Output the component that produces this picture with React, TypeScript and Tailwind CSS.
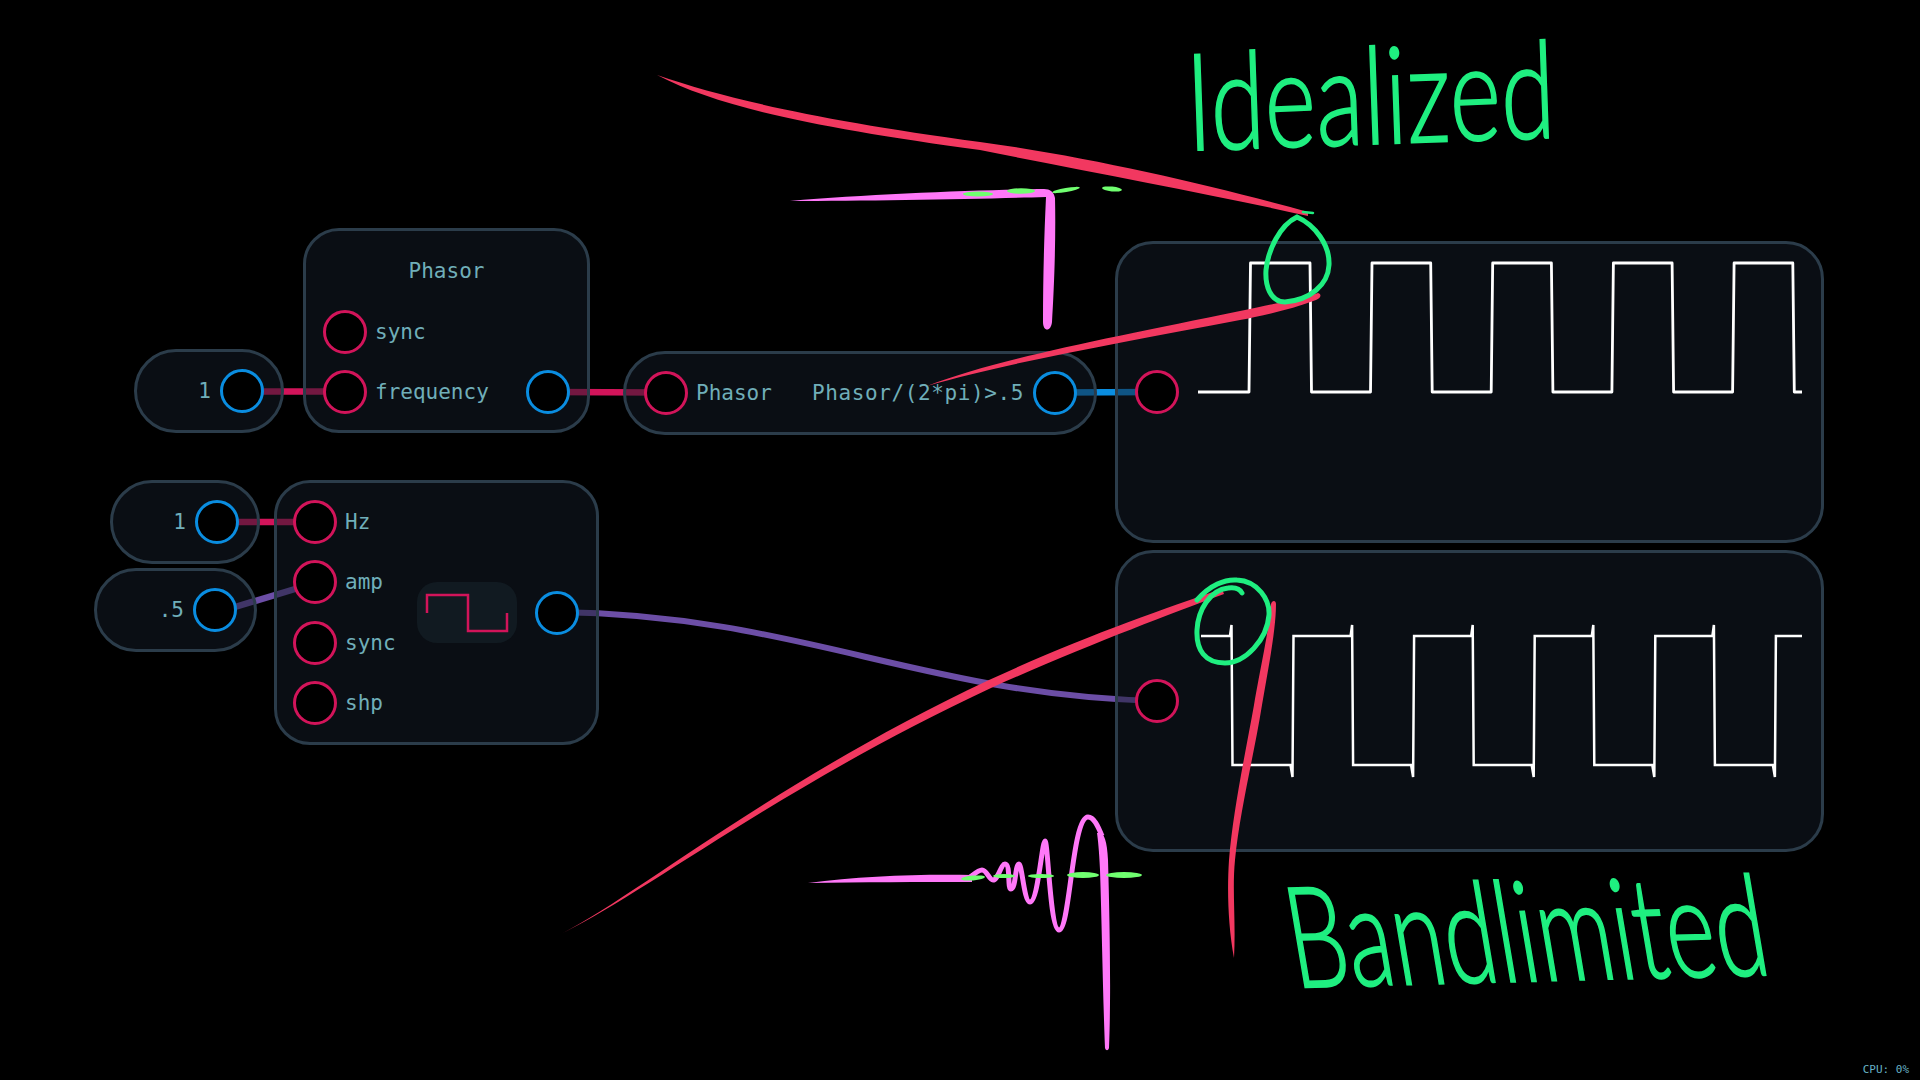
const MONO = 'font-["DejaVu_Sans_Mono",monospace]'

const Port = ({ kind }: { kind: 'in' | 'out' }) => (
  <div
    className={
      kind === 'in'
        ? 'w-[44px] h-[44px] shrink-0 rounded-full bg-black border-[3px] border-[#d2145a]'
        : 'w-[44px] h-[44px] shrink-0 rounded-full bg-black border-[3px] border-[#0a8de0]'
    }
  />
)

const Label = ({ children }: { children: string }) => (
  <span className="text-[21px] leading-[24px] text-[#70aeb9] whitespace-nowrap">{children}</span>
)

const Row = ({ label }: { label: string }) => (
  <div className="flex items-center gap-[8px]">
    <Port kind="in" />
    <Label>{label}</Label>
  </div>
)

const nodeBox = 'absolute flex border-[3px] border-[#2b3c4a] bg-[#141c28]/50'

// square wave from the first scope
const idealWave = () => {
  let d = 'M1198 392 L1249 392 L1250.5 263'
  for (let i = 0; i < 5; i++) {
    const x = 1250.5 + i * 120.7
    d += ` L${x + 59.5} 263 L${x + 61} 392`
    d += i < 4 ? ` L${x + 120} 392 L${x + 121.5} 263` : ' L1802 392'
  }
  return d
}

// the bandlimited one, with overshoot spikes
const bandWave = () => {
  let d = 'M1201 636 L1230 636 L1231.5 625 L1232.5 765 L1290.5 765 L1292.5 777 L1293.5 636'
  for (let i = 1; i < 5; i++) {
    const x = 1231.5 + i * 120.6
    d += ` L${x - 1.5} 636 L${x} 625 L${x + 1} 765 L${x + 59} 765 L${x + 61} 777 L${x + 62} 636`
  }
  return d + ' L1802 636'
}

const Wires = () => (
  <svg className="absolute inset-0" width={1920} height={1080} fill="none">
    <path d="M242 391.5 L345 391.5" stroke="#d2145a" strokeWidth={6.5} />
    <path d="M548 392 L666 392.5" stroke="#d2145a" strokeWidth={6.5} />
    <path d="M1055 392.5 L1157 392" stroke="#0a8de0" strokeWidth={6.5} />
    <path d="M217 522 L315 522" stroke="#d2145a" strokeWidth={6.5} />
    <path d="M225 610 L305 586" stroke="#6c4ea6" strokeWidth={6.5} />
    <path d="M557 612 C800 615 920 695 1157 701" stroke="#6c4ea6" strokeWidth={6} />
  </svg>
)

const Ink = () => (
  <svg className="absolute inset-0 pointer-events-none" width={1920} height={1080} fill="none">
    {/* red arrows */}
    <g fill="#f23860">
      <path d="M657 75 C730 100 820 120 980 142 C1090 157 1210 185 1308 212 L1308 216 C1210 194 1090 172 980 150 C820 128 720 108 657 75 Z" />
      <path d="M927 386 C1000 358 1110 338 1240 311 C1280 303 1305 297 1318 293 C1322 294 1321 298 1316 300 C1290 310 1260 316 1240 320 C1120 343 1010 362 927 386 Z" />
      <path d="M563 933 C640 893 780 778 989 680 C1080 638 1160 610 1222 589 L1224 594 C1165 616 1085 646 991 688 C785 784 650 890 563 933 Z" />
      <path d="M1271 604 C1272 600 1276 600 1276 604 C1276 630 1268 670 1262 705 C1254 755 1240 810 1235 860 C1232 890 1236 920 1234 958 C1228 925 1227 890 1229 860 C1233 810 1246 750 1254 705 C1260 670 1269 630 1271 604 Z" />
    </g>
    {/* green circles */}
    <g stroke="#1fef80" strokeWidth={5} strokeLinecap="round">
      <path d="M1297 217 C1315 225 1330 245 1329 265 C1328 285 1310 300 1285 302 C1270 302 1265 285 1266 270 C1268 250 1280 225 1297 217" />
      <path d="M1303 212 L1313 213" strokeWidth={2.5} />
      <path d="M1197 600 C1210 585 1225 579 1237 580 C1258 581 1270 600 1269 615 C1267 640 1245 663 1225 663 C1205 663 1196 650 1197 630 C1198 610 1210 590 1228 588 C1235 587 1240 589 1242 593" />
    </g>
    {/* pink sketches */}
    <g fill="#ff78f8">
      <path d="M790 201 C870 194 980 190 1044 189 C1050 189 1054 192 1055 198 C1056 240 1054 290 1052 322 C1051 332 1043 332 1043 322 C1043 280 1044 240 1046 197 C980 199 870 201 790 201 Z" />
      <path d="M808 883 C860 876 920 874 972 875 L972 882 C920 882 860 882 808 883 Z" />
      <path d="M1097 833 C1103 830 1107 838 1108 860 C1110 930 1111 1000 1109 1048 C1108 1051 1106 1051 1105 1048 C1103 1000 1102 930 1100 870 C1099 850 1098 840 1097 833 Z" />
    </g>
    <path
      d="M966 880 C972 876 978 870 982 870 C987 870 989 880 993 880 C998 880 1001 864 1005 864 C1011 864 1007 889 1011 889 C1016 889 1015 864 1019 864 C1022 864 1024 902 1030 902 C1038 902 1042 841 1045 841 C1048 841 1050 930 1059 930 C1070 930 1072 817 1088 817 C1094 817 1098 826 1102 836"
      stroke="#ff78f8"
      strokeWidth={5}
      strokeLinejoin="round"
    />
    {/* lime ticks */}
    <g fill="#70ff70">
      <ellipse cx={978} cy={194} rx={15} ry={2.6} />
      <ellipse cx={1021} cy={191} rx={14} ry={2.8} />
      <ellipse cx={1066} cy={190} rx={14} ry={2} transform="rotate(-10 1066 190)" />
      <ellipse cx={1112} cy={189} rx={10} ry={2.4} transform="rotate(6 1112 189)" />
      <ellipse cx={973} cy={878} rx={12} ry={2.4} transform="rotate(-5 973 878)" />
      <ellipse cx={1004} cy={876} rx={11} ry={2} />
      <ellipse cx={1041} cy={876} rx={13} ry={2} />
      <ellipse cx={1083} cy={875} rx={16} ry={3} />
      <ellipse cx={1124} cy={875} rx={18} ry={3} />
    </g>
  </svg>
)

export default function App() {
  return (
    <div className={`relative w-[1920px] h-[1080px] bg-black overflow-hidden ${MONO}`}>
      <Wires />

      {/* constants */}
      <div className={`${nodeBox} left-[134px] top-[349px] w-[150px] h-[84px] rounded-[42px] items-center justify-end gap-[9px] pr-[17px]`}>
        <Label>1</Label>
        <Port kind="out" />
      </div>
      <div className={`${nodeBox} left-[110px] top-[480px] w-[150px] h-[84px] rounded-[42px] items-center justify-end gap-[9px] pr-[18px]`}>
        <Label>1</Label>
        <Port kind="out" />
      </div>
      <div className={`${nodeBox} left-[94px] top-[568px] w-[163px] h-[84px] rounded-[42px] items-center justify-end gap-[9px] pr-[17px]`}>
        <Label>.5</Label>
        <Port kind="out" />
      </div>

      {/* phasor */}
      <div className={`${nodeBox} left-[303px] top-[228px] w-[287px] h-[205px] rounded-[36px] flex-col`}>
        <div className="pt-[28px] text-center">
          <Label>Phasor</Label>
        </div>
        <div className="pl-[17px] pr-[17px] pt-[24.5px] flex flex-col gap-[16.5px]">
          <Row label="sync" />
          <div className="flex items-center justify-between">
            <Row label="frequency" />
            <Port kind="out" />
          </div>
        </div>
      </div>

      {/* oscillator */}
      <div className={`${nodeBox} left-[274px] top-[480px] w-[325px] h-[265px] rounded-[36px] items-center pl-[16px] pr-[17px]`}>
        <div className="flex flex-col gap-[16.3px]">
          <Row label="Hz" />
          <Row label="amp" />
          <Row label="sync" />
          <Row label="shp" />
        </div>
        <div className="ml-auto mr-[18px] w-[100px] h-[61px] rounded-[20px] bg-[#111a21] flex items-center justify-center">
          <svg width={84} height={40} viewBox="0 0 84 40" fill="none">
            <path d="M2 20 L2 2 L43 2 L43 38 L82 38 L82 20" stroke="#d2145a" strokeWidth={2.5} />
          </svg>
        </div>
        <Port kind="out" />
      </div>

      {/* expression */}
      <div className={`${nodeBox} left-[623px] top-[351px] w-[474px] h-[84px] rounded-[42px] items-center pl-[18px] pr-[17px] gap-[8px]`}>
        <Port kind="in" />
        <Label>Phasor</Label>
        <span className="ml-auto mr-[1px] text-[21px] leading-[24px] tracking-[0.6px] text-[#70aeb9] whitespace-nowrap">
          Phasor/(2*pi)&gt;.5
        </span>
        <Port kind="out" />
      </div>

      {/* scopes */}
      <div className={`${nodeBox} left-[1115px] top-[241px] w-[709px] h-[302px] rounded-[38px] items-center pl-[17px] gap-[11px]`}>
        <Port kind="in" />
        <svg width={620} height={296} viewBox="1190 244 620 296" fill="none">
          <path d={idealWave()} stroke="#fff" strokeWidth={2.8} strokeLinejoin="round" />
        </svg>
      </div>
      <div className={`${nodeBox} left-[1115px] top-[550px] w-[709px] h-[302px] rounded-[38px] items-center pl-[17px] gap-[11px]`}>
        <Port kind="in" />
        <svg width={620} height={296} viewBox="1190 553 620 296" fill="none">
          <path d={bandWave()} stroke="#fff" strokeWidth={2.5} strokeLinejoin="miter" />
        </svg>
      </div>

      <Ink />

      {/* handwritten captions */}
      <div className='absolute left-[1186px] top-[33px] origin-left text-[108px] leading-[130px] text-[#1fef80] [-webkit-text-stroke:1.5px_#1fef80] font-["Lato",sans-serif] font-light rotate-[-2deg] scale-x-[0.91] scale-y-[1.25] whitespace-nowrap'>
        Idealized
      </div>
      <div className='absolute left-[1286px] top-[868px] origin-left text-[108px] leading-[130px] text-[#1fef80] [-webkit-text-stroke:1.5px_#1fef80] font-["Lato",sans-serif] font-light rotate-[-1.5deg] scale-x-[0.87] scale-y-[1.3] skew-x-[12deg] whitespace-nowrap'>
        Bandlimited
      </div>

      <div className="absolute right-[11px] bottom-[3px] text-[11px] leading-[14px] text-[#66b2c6]">CPU: 0%</div>
    </div>
  )
}
